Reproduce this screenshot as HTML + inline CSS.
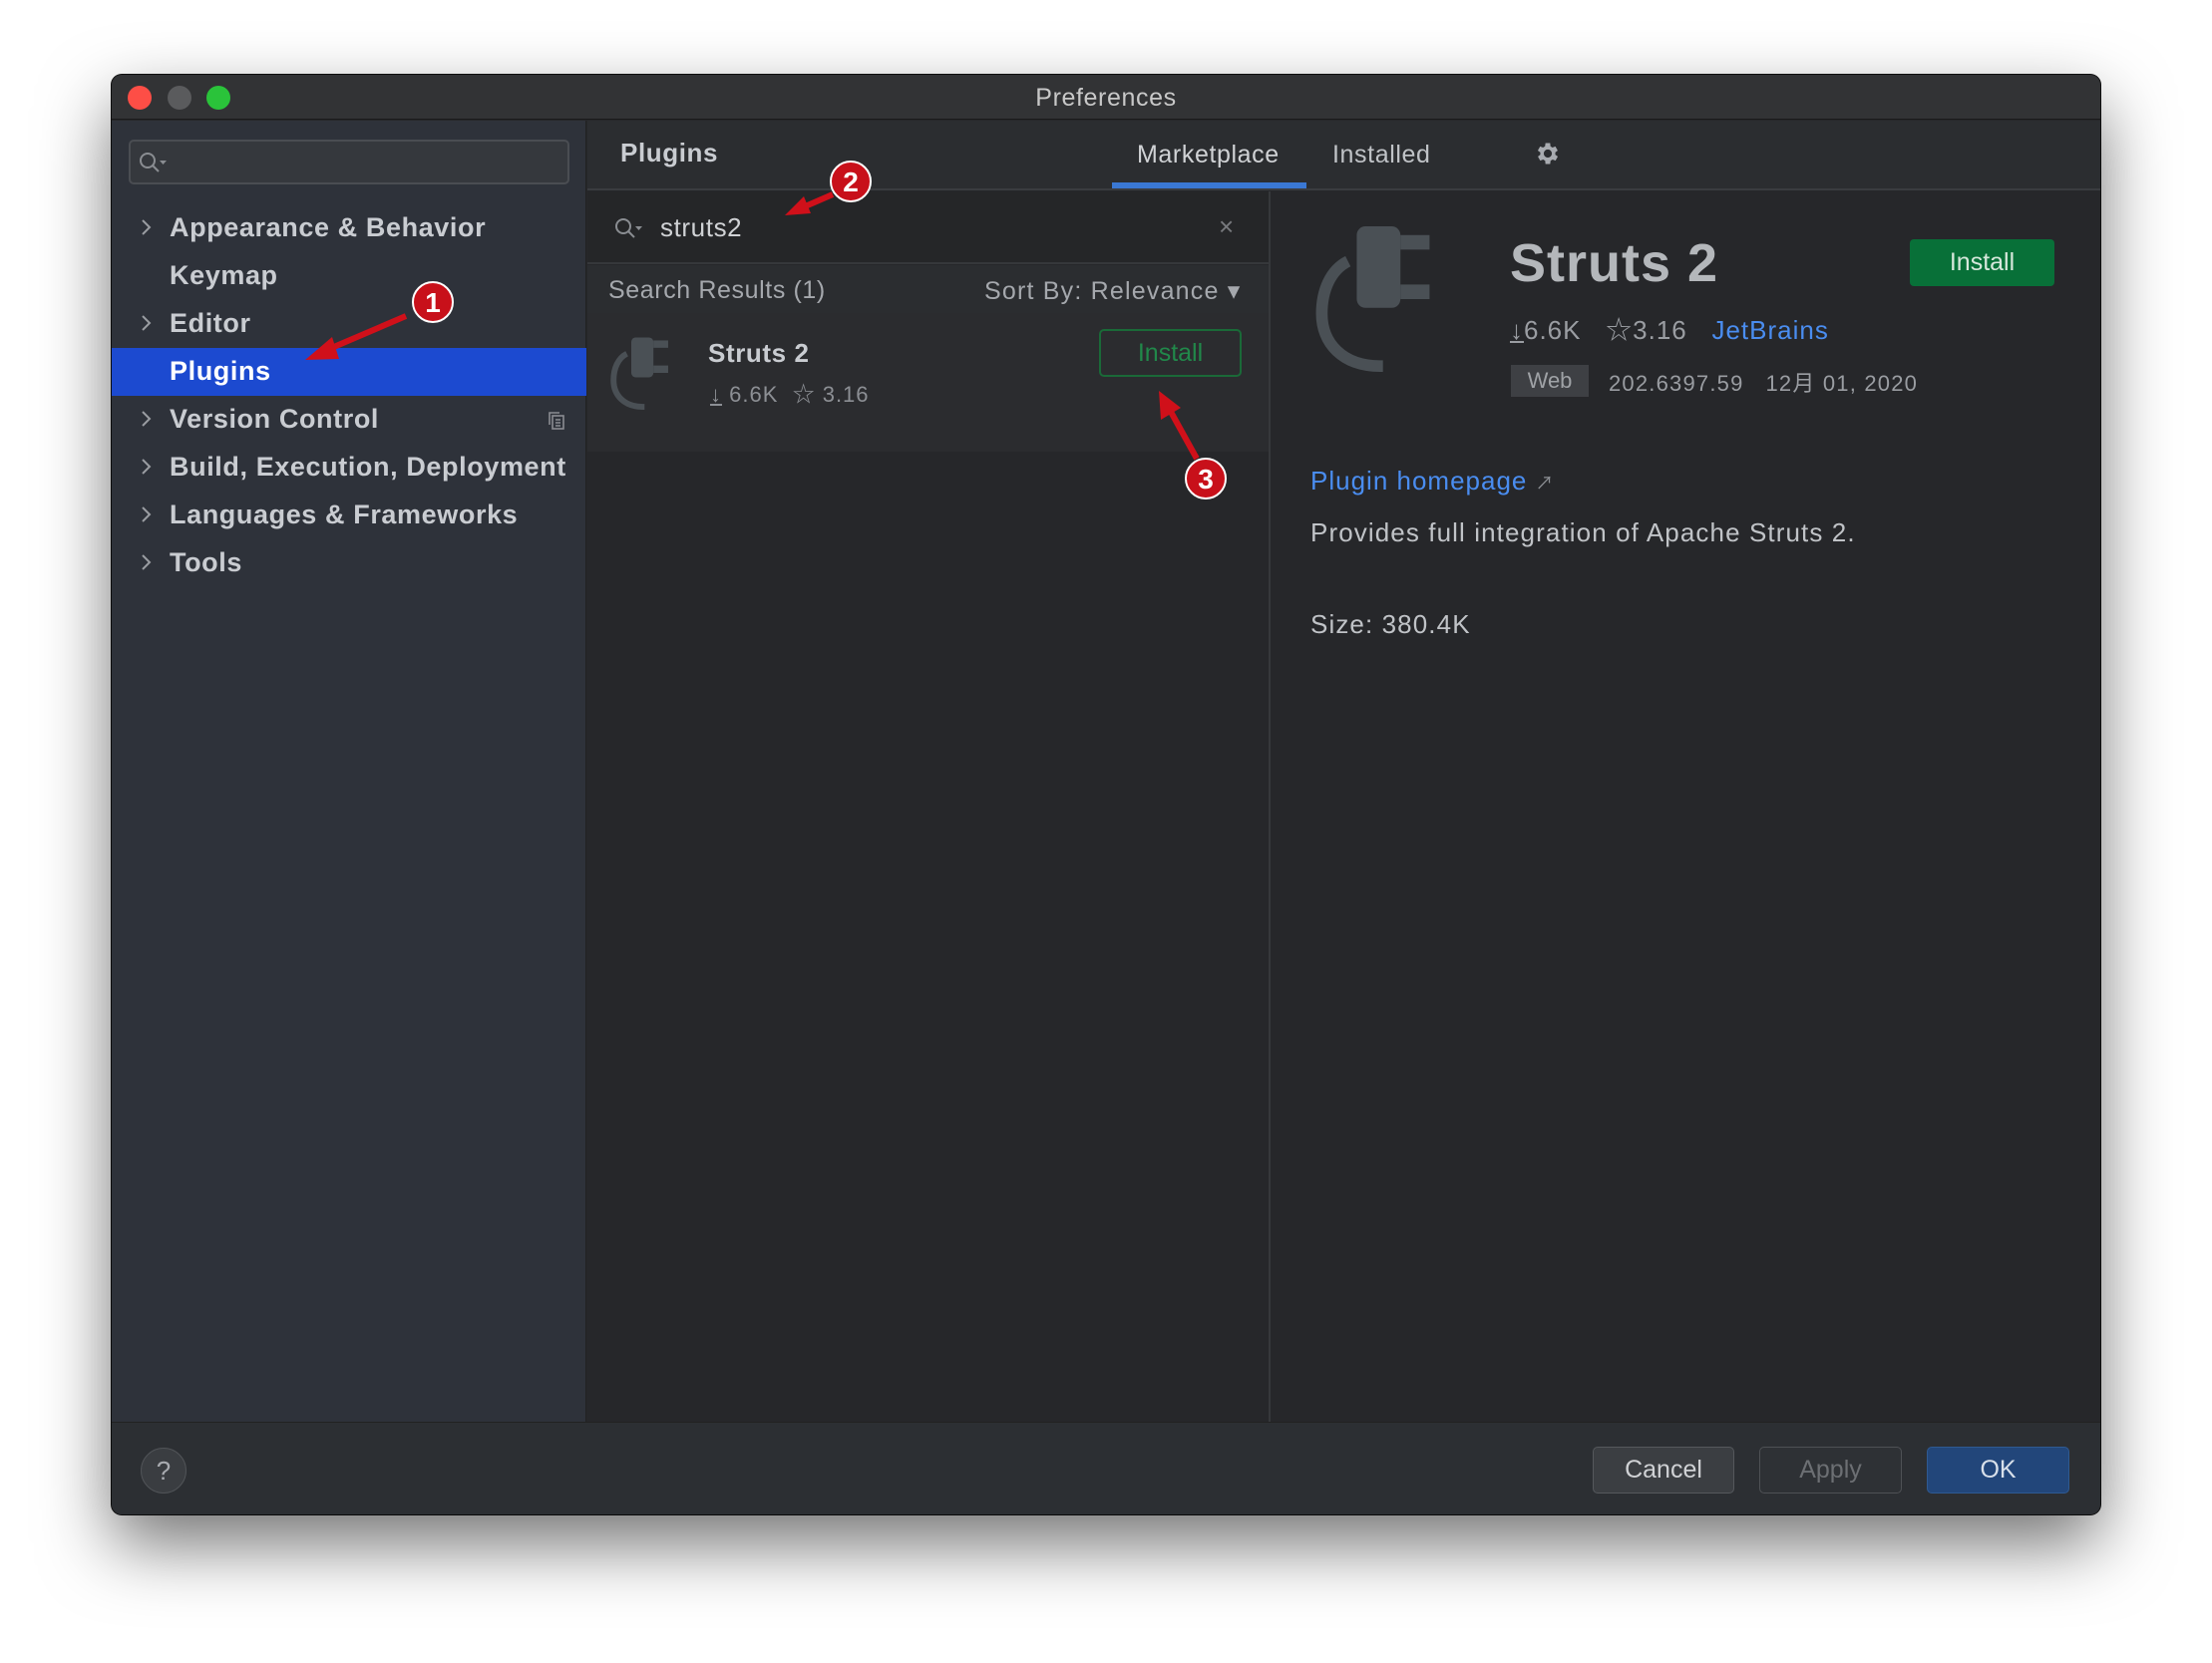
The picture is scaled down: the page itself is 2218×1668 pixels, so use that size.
<!DOCTYPE html>
<html><head><meta charset="utf-8"><style>
*{margin:0;padding:0;box-sizing:border-box}
body{width:2218px;height:1668px;background:#fff;font-family:"Liberation Sans","Noto Sans CJK SC",sans-serif;position:relative;overflow:hidden}
.a{position:absolute}
.win{left:112px;top:75px;width:1994px;height:1444px;border-radius:10px;overflow:hidden;background:#26272a;box-shadow:0 30px 70px rgba(0,0,0,.55),0 0 0 1px #111}
.t{position:absolute;white-space:nowrap;letter-spacing:0.6px}
</style></head><body>
<div class="a win">
 <div class="a" style="left:0;top:0;width:1994px;height:45px;background:#323335;border-bottom:1px solid #1a1a1a"></div>
 <div class="a" style="left:16px;top:11px;width:24px;height:24px;border-radius:50%;background:#fd4e46"></div>
 <div class="a" style="left:56px;top:11px;width:24px;height:24px;border-radius:50%;background:#5a5b5d"></div>
 <div class="a" style="left:95px;top:11px;width:24px;height:24px;border-radius:50%;background:#2ac33a"></div>
 <div class="t" style="left:0;width:1994px;text-align:center;top:9px;font-size:25px;color:#c8c8c8">Preferences</div>
 <!-- sidebar -->
 <div class="a" style="left:0;top:46px;width:476px;height:1305px;background:#2e323a;border-right:1px solid #222"></div>
 <div class="a" style="left:17px;top:65px;width:442px;height:45px;border:2px solid #4a4d52;border-radius:5px;background:#35383d"></div>
 <svg class="a" style="left:26px;top:76px" width="34" height="26"><circle cx="10" cy="10" r="7" fill="none" stroke="#8a8d92" stroke-width="2"/><line x1="15" y1="15" x2="21" y2="21" stroke="#8a8d92" stroke-width="2"/><path d="M22 10 h7 l-3.5 4z" fill="#8a8d92"/></svg>
 <div class="a" style="left:0;top:274px;width:476px;height:48px;background:#1c4ad0"></div>
 <div style="font-size:27px;font-weight:bold;color:#c9ccd1">
  <div class="t" style="left:58px;top:138px">Appearance &amp; Behavior</div>
  <div class="t" style="left:58px;top:186px">Keymap</div>
  <div class="t" style="left:58px;top:234px">Editor</div>
  <div class="t" style="left:58px;top:282px;color:#fff">Plugins</div>
  <div class="t" style="left:58px;top:330px">Version Control</div>
  <div class="t" style="left:58px;top:378px">Build, Execution, Deployment</div>
  <div class="t" style="left:58px;top:426px">Languages &amp; Frameworks</div>
  <div class="t" style="left:58px;top:474px">Tools</div>
 </div>
 <svg class="a" style="left:28px;top:142px" width="14" height="360" fill="none" stroke="#9a9da2" stroke-width="2">
  <path d="M3 4 l7 7 l-7 7"/><path d="M3 100 l7 7 l-7 7"/><path d="M3 196 l7 7 l-7 7"/><path d="M3 244 l7 7 l-7 7"/><path d="M3 292 l7 7 l-7 7"/><path d="M3 340 l7 7 l-7 7"/>
 </svg>
 <svg class="a" style="left:437px;top:337px" width="18" height="20" fill="none" stroke="#8a8d92" stroke-width="1.6"><rect x="5" y="5" width="11" height="13"/><path d="M2 14 V2 h10"/><path d="M8 9h5M8 12h5M8 15h5"/></svg>
 <!-- middle -->
 <div class="a" style="left:477px;top:46px;width:1517px;height:70px;background:#2b2d30;border-bottom:2px solid #3a3c40"></div>
 <div class="t" style="left:510px;top:63px;font-size:26px;font-weight:bold;color:#c9ccd1">Plugins</div>
 <div class="t" style="left:1028px;top:66px;font-size:25px;color:#d0d2d5">Marketplace</div>
 <div class="a" style="left:1003px;top:108px;width:195px;height:6px;background:#3a78d4"></div>
 <div class="t" style="left:1224px;top:66px;font-size:25px;color:#c0c3c7">Installed</div>
 <svg class="a" style="left:1426px;top:65px" width="28" height="28" viewBox="0 0 24 24"><path fill="#a8abb0" d="M19.4 13a7.5 7.5 0 000-2l2.1-1.6-2-3.5-2.5 1a7 7 0 00-1.7-1L15 3h-4l-.4 2.9a7 7 0 00-1.7 1l-2.5-1-2 3.5L6.6 11a7.5 7.5 0 000 2l-2.1 1.6 2 3.5 2.5-1a7 7 0 001.7 1L11 21h4l.4-2.9a7 7 0 001.7-1l2.5 1 2-3.5zM13 15.5a3.5 3.5 0 110-7 3.5 3.5 0 010 7z" transform="translate(-1 0)"/></svg>
 <div class="a" style="left:477px;top:117px;width:684px;height:73px;background:#252628;border-bottom:2px solid #36383b"></div>
 <svg class="a" style="left:503px;top:142px" width="34" height="26"><circle cx="10" cy="10" r="7" fill="none" stroke="#8a8d92" stroke-width="2"/><line x1="15" y1="15" x2="21" y2="21" stroke="#8a8d92" stroke-width="2"/><path d="M22 10 h7 l-3.5 4z" fill="#8a8d92"/></svg>
 <div class="t" style="left:550px;top:138px;font-size:26px;color:#d0d2d5">struts2</div>
 <div class="t" style="left:1110px;top:137px;font-size:26px;color:#77797d">×</div>
 <div class="a" style="left:477px;top:191px;width:684px;height:48px;background:#2b2d30"></div>
 <div class="t" style="left:498px;top:202px;font-size:25px;color:#a5a8ad">Search Results (1)</div>
 <div class="t" style="left:875px;top:202px;font-size:25px;color:#a5a8ad;letter-spacing:1.2px">Sort By: Relevance ▾</div>
 <div class="a" style="left:477px;top:239px;width:684px;height:139px;background:#2b2c2f"></div>
 <svg class="a" style="left:500px;top:262px" width="76" height="74" viewBox="0 0 102 100"><path d="M22 24 C10 30 4 44 4 60 C4 80 18 96 44 96 H46" fill="none" stroke="#4a5055" stroke-width="8"/><rect x="28" y="2" width="30" height="54" rx="6" fill="#4a5055"/><rect x="58" y="6" width="20" height="10" fill="#4a5055"/><rect x="58" y="40" width="20" height="10" fill="#4a5055"/></svg>
 <div class="t" style="left:598px;top:264px;font-size:26px;font-weight:bold;color:#c9ccd1">Struts 2</div>
 <div class="t" style="left:600px;top:303px;font-size:22px;color:#8c8f94;letter-spacing:1px"><span style="text-decoration:underline">↓</span> 6.6K &nbsp;☆ 3.16</div>
 <div class="a" style="left:990px;top:255px;width:143px;height:48px;border:2px solid #1a6a38;border-radius:5px;color:#21884a;font-size:25px;text-align:center;line-height:44px">Install</div>
 <div class="a" style="left:1160px;top:117px;width:2px;height:1308px;background:#36383b"></div>
 <!-- right -->
 <svg class="a" style="left:1206px;top:152px" width="152" height="146" viewBox="0 0 102 100"><path d="M22 24 C10 30 4 44 4 60 C4 80 18 96 44 96 H46" fill="none" stroke="#4a5055" stroke-width="8"/><rect x="28" y="0" width="30" height="56" rx="6" fill="#4a5055"/><rect x="58" y="6" width="20" height="10" fill="#4a5055"/><rect x="58" y="40" width="20" height="10" fill="#4a5055"/></svg>
 <div class="t" style="left:1402px;top:158px;font-size:54px;font-weight:bold;color:#b4b7bb;letter-spacing:1px">Struts 2</div>
 <div class="a" style="left:1803px;top:165px;width:145px;height:47px;background:#087038;border-radius:4px;color:#d8e8dc;font-size:25px;text-align:center;line-height:47px">Install</div>
 <div class="t" style="left:1402px;top:236px;font-size:26px;color:#9a9da2;letter-spacing:1px"><span style="text-decoration:underline">↓</span>6.6K &nbsp;&nbsp;☆3.16 &nbsp;&nbsp;<span style="color:#4a8df0">JetBrains</span></div>
 <div class="a" style="left:1403px;top:291px;width:78px;height:32px;background:#3e4044;color:#9fa2a6;font-size:22px;text-align:center;line-height:32px">Web</div>
 <div class="t" style="left:1501px;top:292px;font-size:22px;color:#9a9da2;letter-spacing:1.2px">202.6397.59 &nbsp;&nbsp;12月 01, 2020</div>
 <div class="t" style="left:1202px;top:392px;font-size:26px;color:#4a8df0;letter-spacing:1px">Plugin homepage <span style="font-size:18px;color:#8c8f94">↗</span></div>
 <div class="t" style="left:1202px;top:444px;font-size:26px;color:#c0c3c7;letter-spacing:1.1px">Provides full integration of Apache Struts 2.</div>
 <div class="t" style="left:1202px;top:536px;font-size:26px;color:#c0c3c7;letter-spacing:1.1px">Size: 380.4K</div>
 <!-- bottom -->
 <div class="a" style="left:0;top:1351px;width:1994px;height:93px;background:#2c2f33;border-top:1px solid #222"></div>
 <div class="a" style="left:29px;top:1377px;width:46px;height:46px;border-radius:50%;background:#3a3d41;border:1px solid #505357;color:#a8abb0;font-size:26px;text-align:center;line-height:44px">?</div>
 <div class="a" style="left:1485px;top:1376px;width:142px;height:47px;border-radius:5px;background:#3b3e42;border:1px solid #55585c;color:#d0d2d5;font-size:25px;text-align:center;line-height:45px">Cancel</div>
 <div class="a" style="left:1652px;top:1376px;width:143px;height:47px;border-radius:5px;background:#2e3135;border:1px solid #4e5155;color:#6c6f73;font-size:25px;text-align:center;line-height:45px">Apply</div>
 <div class="a" style="left:1820px;top:1376px;width:143px;height:47px;border-radius:5px;background:#22467a;border:1px solid #2f5a92;color:#d8e0ea;font-size:25px;text-align:center;line-height:45px">OK</div>
</div>
<!-- annotations -->
<svg class="a" style="left:0;top:0" width="2218" height="1668">
 <g stroke="#d0101a" stroke-width="6" fill="#d0101a">
  <line x1="407" y1="317" x2="330" y2="350"/><polygon stroke="none" points="306,361 333,338 340,360"/>
  <line x1="835" y1="195" x2="805" y2="208"/><polygon stroke="none" points="787,216 806,197 813,214"/>
  <line x1="1200" y1="460" x2="1174" y2="413"/><polygon stroke="none" points="1162,392 1164,421 1184,409"/>
 </g>
 <g fill="#c8101a" stroke="#fff" stroke-width="2"><circle cx="434" cy="303" r="20"/><circle cx="853" cy="182" r="20"/><circle cx="1209" cy="480" r="20"/></g>
 <g fill="#fff" font-family="Liberation Sans" font-weight="bold" font-size="28" text-anchor="middle"><text x="434" y="313">1</text><text x="853" y="192">2</text><text x="1209" y="490">3</text></g>
</svg>
</body></html>
